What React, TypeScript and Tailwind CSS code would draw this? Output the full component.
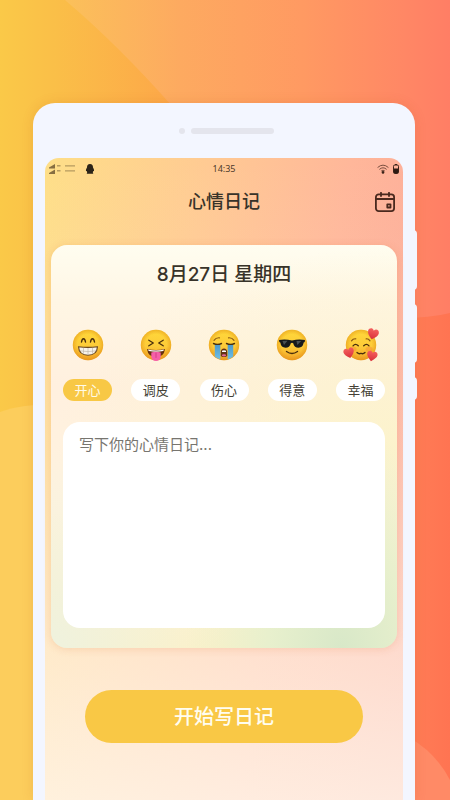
import { useState } from "react";
import type { ReactNode } from "react";

const INK = "#4a2f0c";

function Face({ children }: { children: ReactNode }) {
  return (
    <svg viewBox="0 0 32 32" className="h-8 w-8 overflow-visible" aria-hidden="true">
      <circle cx="16" cy="16" r="15.200" fill="url(#skin)" />
      <circle cx="16" cy="16" r="15.200" fill="url(#rim)" />
      {children}
    </svg>
  );
}

function Heart({ x, y, r, s }: { x: number; y: number; r: number; s: number }) {
  return (
    <path
      transform={`translate(${x} ${y}) rotate(${r}) scale(${s})`}
      d="M0 5C-3 2.500-5 .5-5-1.800-5-4-3-5-1.500-4.500-.7-4.200-.2-3.600 0-3 .2-3.600.7-4.200 1.500-4.500 3-5 5-4 5-1.800 5 .5 3 2.500 0 5Z"
      fill="url(#heart)"
    />
  );
}

function Grin() {
  return (
    <Face>
      <path d="M9.500 13Q10 9.800 11.500 9.800T13.500 13M18.500 13Q19 9.800 20.500 9.800T22.500 13" fill="none" stroke={INK} strokeWidth="1.400" strokeLinecap="round" />
      <path d="M6.500 17.800Q16 19 25.500 17.800Q25 26.200 16 26.200T6.500 17.800Z" fill="#f7f3ec" stroke="#6b471c" strokeWidth="1.100" />
      <path d="M7.500 21.800Q16 23.400 24.500 21.800M11.500 18.800V24.800M16 19V25.500M20.500 18.800V24.800" fill="none" stroke="#b9b0a4" strokeWidth=".6" />
    </Face>
  );
}

function Tongue() {
  return (
    <Face>
      <path d="M8.800 11.200L13.300 14L8.800 16.800M23.200 11.200L18.700 14L23.200 16.800" fill="none" stroke={INK} strokeWidth="1.300" strokeLinecap="round" strokeLinejoin="round" />
      <path d="M7 20Q16 22 25 20Q24 28 16 28T7 20Z" fill="#67310f" />
      <path d="M8 20.500Q16 22.400 24 20.500L23.300 22Q16 23.600 8.700 22Z" fill="#fff" />
      <path d="M11.300 23.500Q16 22 20.700 23.500V28Q20 32 16 32T11.300 28Z" fill="#f65fa8" />
      <path d="M16 24V28.500" stroke="#cf3d84" strokeWidth=".9" strokeLinecap="round" />
    </Face>
  );
}

function Sob() {
  return (
    <Face>
      <path d="M6 11.300Q8 8.500 11.500 8.800M26 11.300Q24 8.500 20.500 8.800" fill="none" stroke="#8a5713" strokeWidth="1.200" strokeLinecap="round" />
      <path d="M6.800 15.500H12.300V30.300Q9.300 29.500 6.800 27.500ZM19.700 15.500H25.200V27.500Q22.700 29.500 19.700 30.300Z" fill="url(#tear)" />
      <path d="M5.500 14.500Q9.500 16.300 13.500 14.500M18.500 14.500Q22.500 16.300 26.500 14.500" fill="none" stroke={INK} strokeWidth="1.400" strokeLinecap="round" />
      <path d="M12.800 23Q13 19.500 16 19.500T19.200 23V26.500Q19 28 16 28T12.800 26.500Z" fill="#653414" />
      <path d="M14 21.800Q16 20.500 18 21.800V22.900H14Z" fill="#fff" />
      <ellipse cx="16" cy="26.300" rx="2.200" ry="1.100" fill="#e5679a" />
    </Face>
  );
}

function Cool() {
  return (
    <Face>
      <path d="M3 11Q9 9.800 16 11.400Q23 9.800 29 11L28.700 13L27.700 13.600Q26.900 18.800 22.500 18.800Q18.300 18.800 17.200 14.300Q16 13.400 14.800 14.300Q13.700 18.800 9.500 18.800Q5.100 18.800 4.300 13.600L3.300 13Z" fill="#171a1c" />
      <path d="M6.500 12L11.500 11.700L8 16ZM20.500 11.900L25.200 12L21.300 16Z" fill="#5b6366" opacity=".75" />
      <path d="M10.500 22.500Q16 26.500 21.500 22.500" fill="none" stroke={INK} strokeWidth="1.400" strokeLinecap="round" />
    </Face>
  );
}

function Adore() {
  return (
    <Face>
      <ellipse cx="8" cy="20" rx="3.500" ry="2.500" fill="#f5773c" opacity=".35" />
      <ellipse cx="24" cy="20" rx="3.500" ry="2.500" fill="#f5773c" opacity=".35" />
      <path d="M6.500 11.800Q8 9.500 10.800 9.800M21.200 9.800Q23.500 9.500 25 11.800" fill="none" stroke="#8a5713" strokeWidth="1.200" strokeLinecap="round" />
      <path d="M8 16.800Q10.500 13.800 13.300 16.800M18.700 16.800Q21.500 13.800 24 16.800" fill="none" stroke={INK} strokeWidth="1.300" strokeLinecap="round" />
      <path d="M12 23.500Q14 25.500 16 24.300Q18 25.500 20 23.500" fill="none" stroke={INK} strokeWidth="1.300" strokeLinecap="round" />
      <Heart x={28} y={5} r={14} s={1.1} />
      <Heart x={4} y={24} r={-14} s={1.05} />
      <Heart x={27} y={27} r={12} s={1.05} />
    </Face>
  );
}

const MOODS = [
  { id: "happy", label: "开心", icon: <Grin /> },
  { id: "naughty", label: "调皮", icon: <Tongue /> },
  { id: "sad", label: "伤心", icon: <Sob /> },
  { id: "proud", label: "得意", icon: <Cool /> },
  { id: "blessed", label: "幸福", icon: <Adore /> },
];

// Gradients shared by all the faces
function FaceDefs() {
  return (
    <svg className="absolute h-0 w-0" aria-hidden="true">
      <defs>
        <linearGradient id="skin" x1="0" y1="0" x2="0" y2="1">
          <stop offset="0" stopColor="#ffd83a" />
          <stop offset=".55" stopColor="#fdcb38" />
          <stop offset="1" stopColor="#f2a428" />
        </linearGradient>
        <radialGradient id="rim">
          <stop offset=".7" stopColor="#e08a10" stopOpacity="0" />
          <stop offset="1" stopColor="#dd8810" stopOpacity=".45" />
        </radialGradient>
        <linearGradient id="tear" x1="0" y1="0" x2="0" y2="1">
          <stop offset="0" stopColor="#4c98c8" />
          <stop offset="1" stopColor="#6fc0e6" />
        </linearGradient>
        <linearGradient id="heart" x1="0" y1="0" x2="0" y2="1">
          <stop offset="0" stopColor="#f4605e" />
          <stop offset="1" stopColor="#d92f3a" />
        </linearGradient>
      </defs>
    </svg>
  );
}

function Backdrop() {
  return (
    <svg className="absolute inset-0 h-full w-full" viewBox="0 0 450 800" preserveAspectRatio="none" aria-hidden="true">
      <defs>
        <linearGradient id="sky" gradientUnits="userSpaceOnUse" x1="0" y1="0" x2="450" y2="0">
          <stop offset=".15" stopColor="#fbc05a" />
          <stop offset=".4" stopColor="#fdaa60" />
          <stop offset=".67" stopColor="#ff9a62" />
          <stop offset=".9" stopColor="#ff8765" />
          <stop offset="1" stopColor="#ff7e65" />
        </linearGradient>
        <linearGradient id="wedge" gradientUnits="userSpaceOnUse" x1="0" y1="0" x2="180" y2="0">
          <stop offset="0" stopColor="#fac948" />
          <stop offset=".3" stopColor="#fabf48" />
          <stop offset="1" stopColor="#fda649" />
        </linearGradient>
        <linearGradient id="ember" gradientUnits="userSpaceOnUse" x1="410" y1="0" x2="450" y2="0">
          <stop offset="0" stopColor="#ff7d56" />
          <stop offset="1" stopColor="#ff7452" />
        </linearGradient>
      </defs>
      <path d="M0 0H450V800H0Z" fill="url(#sky)" />
      <path d="M0 0H65Q118 45 172 106V420H0Z" fill="url(#wedge)" />
      <path d="M0 412Q20 404 60 404V800H0Z" fill="#fccd5c" />
      <path d="M400 318Q430 318 450 313V800H400Z" fill="url(#ember)" />
      <path d="M410 738Q436 753 450 780V800H410Z" fill="#ff8a66" />
    </svg>
  );
}

function StatusBar() {
  return (
    <div className="grid grid-cols-3 items-center px-1 pt-1 text-[#4b3a2a]">
      <div className="flex items-center gap-2">
        <svg viewBox="0 0 28 12" className="h-3 w-7" aria-hidden="true">
          <g fill="#715b35">
            <path d="M0 5.500V4.500L6 1V5.500ZM0 11V10L6 6.500V11Z" opacity=".85" />
            <path d="M8 2h3.500v1.500H8zM8 7h3.500v1.500H8zM16 2.200h10v1.300H16zM16 7.200h10v1.300H16z" opacity=".5" />
          </g>
        </svg>
        <svg viewBox="0 0 10 12" className="h-3 w-2.5" aria-hidden="true">
          <path d="M5 1C2.800 1 2 2.600 2 4.400 1.200 5.500.8 7 1 8.200L1.800 8 2.200 9.300 1.700 10.800H8.300L7.800 9.300 8.200 8 9 8.200C9.200 7 8.800 5.500 8 4.400 8 2.600 7.200 1 5 1Z" fill="#2c2418" />
        </svg>
      </div>
      <span className="text-center font-['Noto_Sans',sans-serif] text-[9px] leading-[14px]">14:35</span>
      <div className="flex items-center justify-end gap-1">
        <svg viewBox="0 0 12 10" className="h-2.5 w-3" fill="none" stroke="#6b4435" aria-hidden="true">
          <path d="M.6 3.500Q6-1.200 11.400 3.500M2.400 5.400Q6 2.200 9.600 5.400M4.200 7Q6 5.400 7.800 7" strokeWidth=".9" />
          <circle cx="6" cy="8.400" r="1.300" fill="#3a2218" stroke="none" />
        </svg>
        <svg viewBox="0 0 6 10" className="h-2.5 w-1.5" aria-hidden="true">
          <rect x=".5" y="1" width="5" height="8.500" rx="1.300" fill="none" stroke="#3a2218" />
          <path d="M1 4.500h4v4.500H1z" fill="#2d1a13" />
          <path d="M2 0h2v1H2z" fill="#3a2218" />
        </svg>
      </div>
    </div>
  );
}

export default function App() {
  const [mood, setMood] = useState("happy");
  const [text, setText] = useState("");

  return (
    <div className="relative flex min-h-screen flex-col overflow-hidden pt-[103px] pr-[35px] pl-[33px] font-['Inter','Noto_Sans_CJK_SC',sans-serif] text-[#383329]">
      <Backdrop />
      <FaceDefs />

      <div className="relative flex flex-1 flex-col rounded-t-[22px] bg-[#f3f6ff] px-3 shadow-[0_0_12px_rgba(180,80,20,0.15)]">
        {/* Side keys */}
        <div className="absolute top-[127px] -right-0.5 flex w-1 flex-col gap-3.5" aria-hidden="true">
          <span className="h-[60px] rounded-r-sm bg-[#f3f6ff]" />
          <span className="h-[59px] rounded-r-sm bg-[#f3f6ff]" />
          <span className="h-[23px] rounded-r-sm bg-[#f3f6ff]" />
        </div>

        {/* Camera and speaker */}
        <div className="flex h-[55px] items-center justify-center gap-1.5 pl-1" aria-hidden="true">
          <span className="h-1.5 w-1.5 rounded-full bg-[#e4e5ed]" />
          <span className="h-1.5 w-[83px] rounded-full bg-[#e4e5ed]" />
        </div>

        <main className="flex-1 rounded-t-[14px] bg-[linear-gradient(to_bottom,transparent_0%,rgba(255,247,230,0.06)_15%,rgba(255,247,232,0.3)_45%,rgba(255,247,236,0.66)_78%,rgba(255,248,238,0.82)_100%),linear-gradient(100deg,#fedf88_0%,#ffca93_35%,#ffb79a_65%,#fba497_100%)] pb-14">
          <StatusBar />

          <header className="grid grid-cols-[1fr_auto_1fr] items-center px-2 pt-3">
            <h1 className="col-start-2 text-lg leading-7 font-medium">心情日记</h1>
            <button type="button" aria-label="日历" className="justify-self-end">
              <svg viewBox="0 0 20 20" className="h-5 w-5" fill="none" stroke="#49291e" strokeWidth="1.800" strokeLinecap="round" aria-hidden="true">
                <rect x=".9" y="2.300" width="18.200" height="16.800" rx="2.800" />
                <path d="M1.500 7H18.500M6 .8V4M14 .8V4" />
                <rect x="12.300" y="12.300" width="3.200" height="3.200" strokeLinejoin="round" />
              </svg>
            </button>
          </header>

          <section className="mx-1.5 mt-[29px] rounded-2xl bg-[radial-gradient(ellipse_at_84%_100%,#d8e8c8_0%,#e8f0cd_18%,transparent_38%),radial-gradient(ellipse_at_0%_100%,#eff2de_0%,transparent_35%),radial-gradient(ellipse_at_100%_50%,#fcf3cc_0%,transparent_70%),linear-gradient(to_bottom,#fffdf0_0%,#fff6e4_14%,#fff0df_35%,#fff3df_65%,#fcf1c8_100%)] px-3 pt-4 pb-5 shadow-[0_1px_8px_rgba(220,110,50,0.2)]">
            <h2 className="text-center text-[19px] leading-7 font-medium">8月27日 星期四</h2>

            <fieldset aria-label="心情" className="mt-10 flex justify-between">
              {MOODS.map((m) => (
                <label key={m.id} className="relative flex w-[49px] cursor-pointer flex-col items-center gap-[18px]">
                  <input
                    type="radio"
                    name="mood"
                    value={m.id}
                    checked={mood === m.id}
                    onChange={() => setMood(m.id)}
                    className="peer absolute inset-0 appearance-none"
                  />
                  {m.icon}
                  <span className="w-full rounded-full bg-white text-center text-[13px] leading-[22px] text-[#443f35] peer-checked:bg-[#f8c845] peer-checked:text-[#fffbe8]">
                    {m.label}
                  </span>
                </label>
              ))}
            </fieldset>

            <textarea
              aria-label="心情日记"
              placeholder="写下你的心情日记..."
              value={text}
              onChange={(e) => setText(e.target.value)}
              className="mt-[21px] block h-[206px] w-full resize-none rounded-[17px] bg-white px-4 py-[11px] text-[15px] leading-6 outline-none placeholder:text-[#77756f]"
            />
          </section>

          <button
            type="button"
            className="mx-10 mt-[42px] block h-[53px] w-[calc(100%-80px)] rounded-full bg-[#f9c845] text-xl font-medium text-[#fffdf0]"
          >
            开始写日记
          </button>
        </main>
      </div>
    </div>
  );
}
